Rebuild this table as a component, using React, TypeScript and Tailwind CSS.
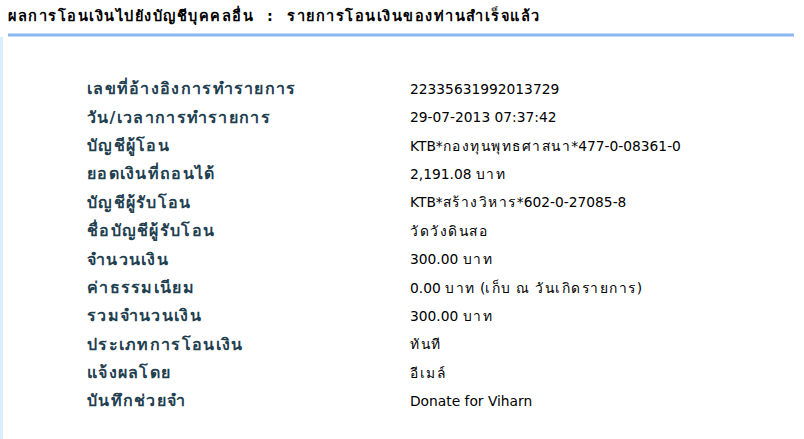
import React from "react";

const rows: [string, string][] = [
  ["เลขที่อ้างอิงการทำรายการ", "22335631992013729"],
  ["วัน/เวลาการทำรายการ", "29-07-2013 07:37:42"],
  ["บัญชีผู้โอน", "KTB*กองทุนพุทธศาสนา*477-0-08361-0"],
  ["ยอดเงินที่ถอนได้", "2,191.08 บาท"],
  ["บัญชีผู้รับโอน", "KTB*สร้างวิหาร*602-0-27085-8"],
  ["ชื่อบัญชีผู้รับโอน", "วัดวังดินสอ"],
  ["จำนวนเงิน", "300.00 บาท"],
  ["ค่าธรรมเนียม", "0.00 บาท (เก็บ ณ วันเกิดรายการ)"],
  ["รวมจำนวนเงิน", "300.00 บาท"],
  ["ประเภทการโอนเงิน", "ทันที"],
  ["แจ้งผลโดย", "อีเมล์"],
  ["บันทึกช่วยจำ", "Donate for Viharn"],
];

function Value({ text }: { text: string }) {
  const parts = text.split(/([\u0E00-\u0E7F]+)/);
  return (
    <>
      {parts.map((p, i) =>
        /[\u0E00-\u0E7F]/.test(p) ? (
          <span key={i} className="tracking-[1.5px]">{p}</span>
        ) : (
          <span key={i}>{p}</span>
        )
      )}
    </>
  );
}

export default function App() {
  return (
    <div className="w-[804px] h-[439px] bg-white overflow-hidden flex flex-col" style={{ fontFamily: '"DejaVu Sans", "Noto Sans", sans-serif' }}>
      <div className="h-[33px] flex items-center pl-2 pt-[1px] text-[14.5px] font-bold text-black tracking-[1.5px] whitespace-nowrap">
        ผลการโอนเงินไปยังบัญชีบุคคลอื่น&nbsp;&nbsp;:&nbsp;&nbsp;รายการโอนเงินของท่านสำเร็จแล้ว
      </div>
      <div className="ml-2 mr-[10px] h-[4px] bg-[#8cb7f0] border-y border-[#c4dcf8]" />
      <div className="flex-1 border-l-[3px] border-[#dbeefb] pt-[38px] pl-[84px]">
        {rows.map(([label, value]) => (
          <div key={label} className="flex h-[28.4px] items-center">
            <div className="w-[323px] text-[16px] font-bold text-[#1f4050] tracking-[1.3px] whitespace-nowrap">{label}</div>
            <div className="text-[13.8px] text-black whitespace-nowrap"><Value text={value} /></div>
          </div>
        ))}
      </div>
    </div>
  );
}
